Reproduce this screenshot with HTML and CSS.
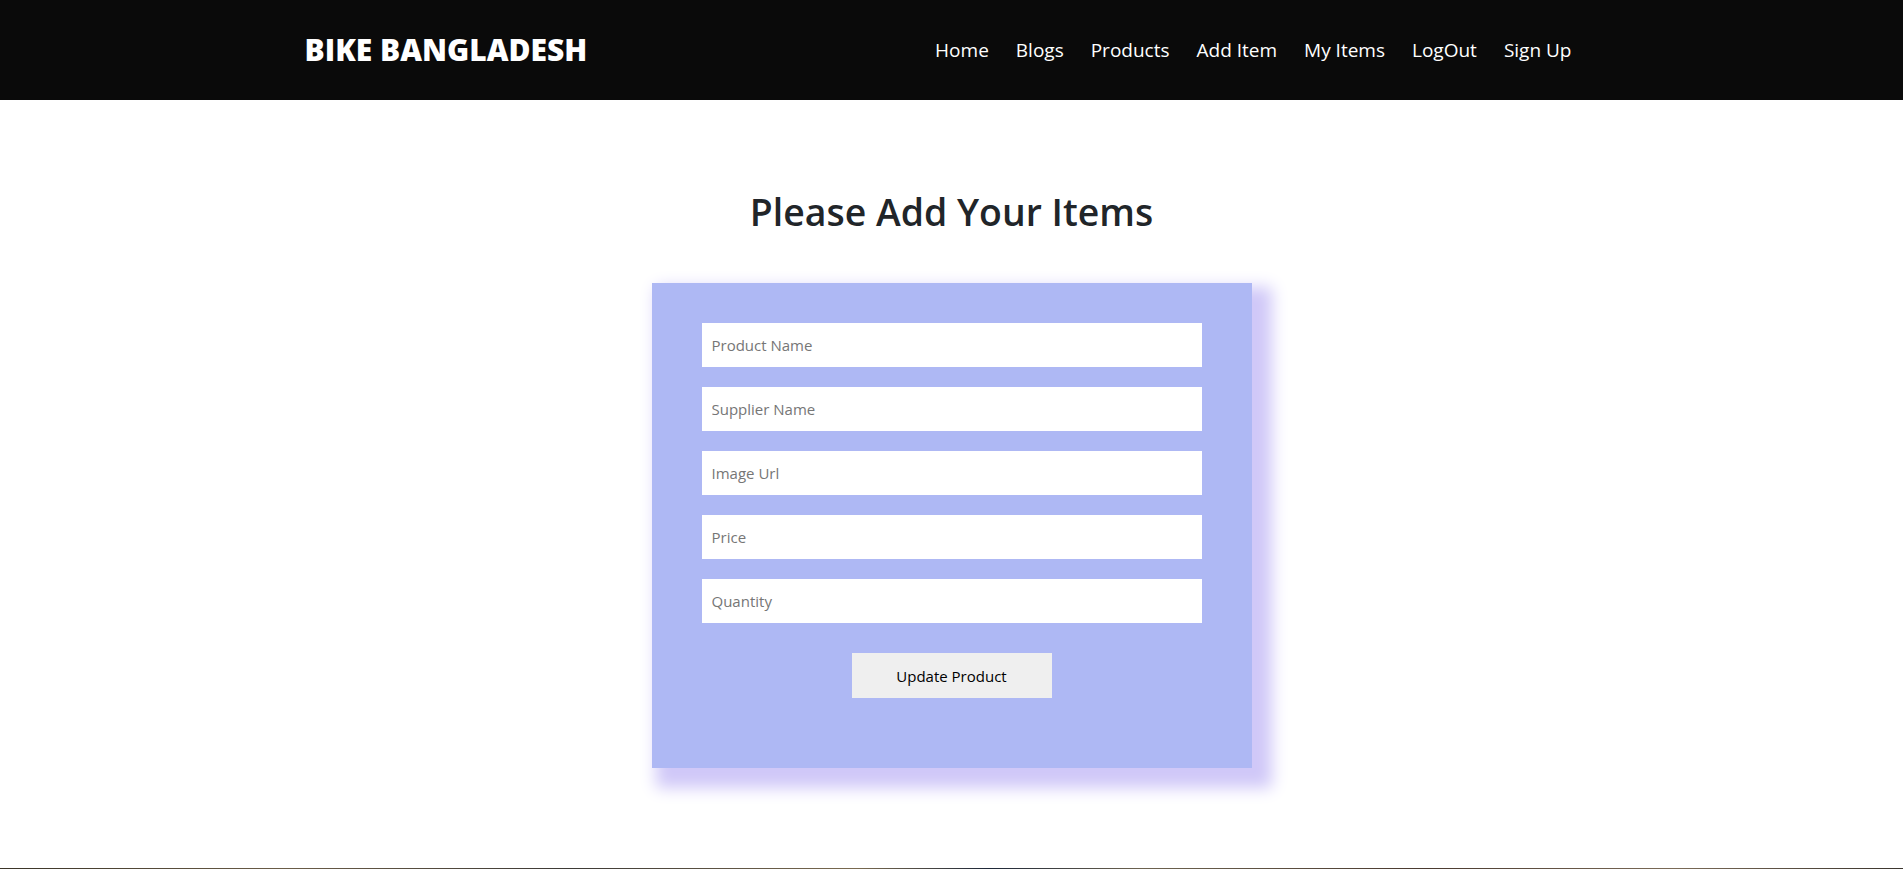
FILE: index.html
```html
<!DOCTYPE html>
<html lang="en">
<head>
<meta charset="utf-8">
<title>Bike Bangladesh - Add Item</title>
<link rel="stylesheet" href="styles.css">
</head>
<body>
<header class="navbar">
  <div class="nav-container">
    <a class="brand" href="#">BIKE BANGLADESH</a>
    <nav class="nav-links">
      <a href="#">Home</a>
      <a href="#">Blogs</a>
      <a href="#">Products</a>
      <a href="#">Add Item</a>
      <a href="#">My Items</a>
      <a href="#">LogOut</a>
      <a href="#">Sign Up</a>
    </nav>
  </div>
</header>
<main class="main">
  <h1 class="title">Please Add Your Items</h1>
  <form class="card">
    <input class="field" type="text" placeholder="Product Name">
    <input class="field" type="text" placeholder="Supplier Name">
    <input class="field" type="text" placeholder="Image Url">
    <input class="field" type="text" placeholder="Price">
    <input class="field" type="text" placeholder="Quantity">
    <button class="submit" type="button">Update Product</button>
  </form>
</main>
<section class="next-section"></section>
</body>
</html>
```
FILE: styles.css
```css
* { box-sizing: border-box; }
html, body { margin: 0; padding: 0; }
body {
  font-family: "Open Sans", "Noto Sans", "Liberation Sans", sans-serif;
  color: #212529;
  background: #fff;
}
.navbar {
  background: #0a0a0a;
  height: 100px;
}
.nav-container {
  max-width: 1320px;
  height: 100%;
  margin: 0 auto;
  padding: 0 40px 0 13px;
  display: flex;
  align-items: center;
  justify-content: space-between;
}
.brand {
  color: #fff;
  text-decoration: none;
  font-weight: 800;
  font-size: 30px;
  padding-bottom: 2px;
}
.nav-links {
  display: flex;
  gap: 27px;
  padding-bottom: 1px;
}
.nav-links a {
  color: #fff;
  text-decoration: none;
  font-size: 19px;
}
.main {
  display: flex;
  flex-direction: column;
  align-items: center;
  padding-top: 88px;
  padding-bottom: 100px;
}
.title {
  margin: 0 0 47px;
  font-size: 37.4px;
  font-weight: 600;
  line-height: 48px;
}
.card {
  width: 600px;
  background: #aeb8f4;
  padding: 40px 50px 70px;
  display: flex;
  flex-direction: column;
  align-items: center;
  gap: 20px;
  box-shadow: 12px 12px 15px 8px #d0c8f8;
}
.field {
  width: 500px;
  height: 44px;
  border: none;
  outline: none;
  background: #fff;
  padding: 0 10px;
  font-family: inherit;
  font-size: 15px;
  color: #212529;
}
.field::placeholder {
  color: #767676;
}
.submit {
  margin-top: 10px;
  width: 200px;
  height: 45px;
  border: none;
  background: #efefef;
  font-family: inherit;
  font-size: 15px;
  color: #000;
}
.next-section {
  height: 300px;
  background: linear-gradient(90deg, #3a3428 0%, #6b5d48 15%, #3d3a36 30%, #7a6a50 45%, #1e2838 52%, #6d6350 60%, #4a3a30 75%, #7b6b58 88%, #3b352e 100%);
}
```
